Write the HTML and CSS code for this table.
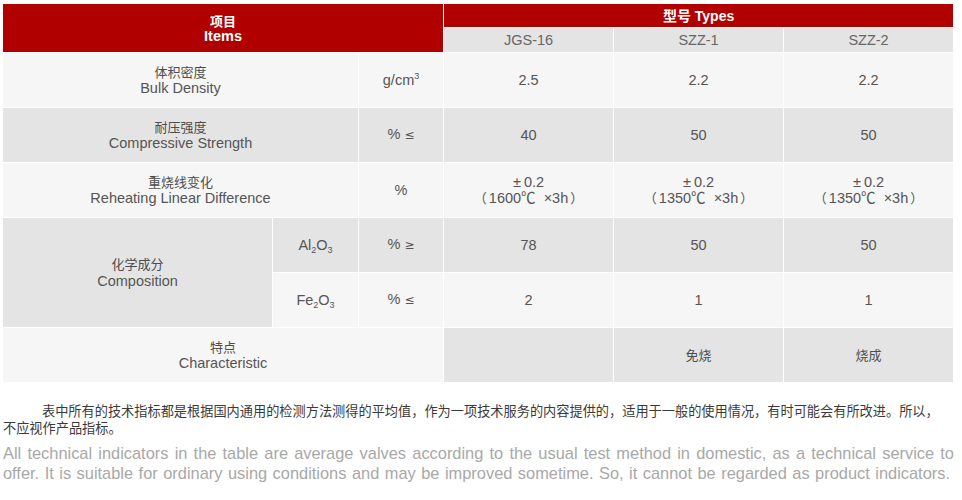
FILE: index.html
```html
<!DOCTYPE html>
<html lang="zh-CN">
<head>
<meta charset="utf-8">
<title>技术指标</title>
<link rel="stylesheet" href="styles.css">
</head>
<body>
<table class="spec">
  <colgroup>
    <col class="c1"><col class="c2"><col class="c3"><col class="c4"><col class="c5"><col class="c6">
  </colgroup>
  <thead>
    <tr class="h1">
      <th class="red items" colspan="3" rowspan="2"><span class="hzh">项目</span><br><span class="hen">Items</span></th>
      <th class="red types" colspan="3">型号 Types</th>
    </tr>
    <tr class="h2">
      <th class="sub">JGS-16</th>
      <th class="sub">SZZ-1</th>
      <th class="sub">SZZ-2</th>
    </tr>
  </thead>
  <tbody>
    <tr class="light">
      <td colspan="2"><span class="zh">体积密度</span><br>Bulk Density</td>
      <td>g/cm<sup>3</sup></td>
      <td>2.5</td><td>2.2</td><td>2.2</td>
    </tr>
    <tr class="gray">
      <td colspan="2"><span class="zh">耐压强度</span><br>Compressive Strength</td>
      <td>% <span class="rel">≤</span></td>
      <td>40</td><td>50</td><td>50</td>
    </tr>
    <tr class="light">
      <td colspan="2"><span class="zh">重烧线变化</span><br>Reheating Linear Difference</td>
      <td>%</td>
      <td class="two"><span class="pm">±</span>0.2<br><span class="paren">（</span>1600℃ <span class="x">×</span>3h<span class="paren">）</span></td>
      <td class="two"><span class="pm">±</span>0.2<br><span class="paren">（</span>1350℃ <span class="x">×</span>3h<span class="paren">）</span></td>
      <td class="two"><span class="pm">±</span>0.2<br><span class="paren">（</span>1350℃ <span class="x">×</span>3h<span class="paren">）</span></td>
    </tr>
    <tr class="gray">
      <td rowspan="2" class="comp"><span class="zh">化学成分</span><br>Composition</td>
      <td>Al<sub>2</sub>O<sub>3</sub></td>
      <td>% <span class="rel">≥</span></td>
      <td>78</td><td>50</td><td>50</td>
    </tr>
    <tr class="light">
      <td>Fe<sub>2</sub>O<sub>3</sub></td>
      <td>% <span class="rel">≤</span></td>
      <td>2</td><td>1</td><td>1</td>
    </tr>
    <tr class="light">
      <td colspan="3"><span class="zh">特点</span><br>Characteristic</td>
      <td class="g"></td>
      <td class="g zh">免烧</td>
      <td class="g zh">烧成</td>
    </tr>
  </tbody>
</table>

<div class="note">
  <p class="note-zh first">表中所有的技术指标都是根据国内通用的检测方法测得的平均值，作为一项技术服务的内容提供的，适用于一般的使用情况，有时可能会有所改进。所以，</p>
  <p class="note-zh">不应视作产品指标。</p>
  <p class="note-en l1">All technical indicators in the table are average valves according to the usual test method in domestic, as a technical service to</p>
  <p class="note-en l2">offer. It is suitable for ordinary using conditions and may be improved sometime. So, it cannot be regarded as product indicators.</p>
</div>
</body>
</html>
```
FILE: styles.css
```css
html, body {
  margin: 0;
  padding: 0;
  background: #ffffff;
}

body {
  font-family: "Liberation Sans", Arial, "Noto Sans CJK SC", sans-serif;
  color: #555555;
}

.spec {
  margin: 3px 0 0 2px;
  width: 952px;
  table-layout: fixed;
  border-collapse: separate;
  border-spacing: 1px;
}

.c1 { width: 269px; }
.c2 { width: 85px; }
.c3 { width: 84px; }
.c4 { width: 169px; }
.c5 { width: 169px; }
.c6 { width: 169px; }

.spec th,
.spec td {
  padding: 0;
  text-align: center;
  vertical-align: middle;
  font-weight: normal;
  font-size: 14.5px;
  line-height: 16.5px;
}

.h1 { height: 23px; }
.h2 { height: 24px; }

.red {
  background: #b00000;
  color: #ffffff;
}

.spec th.items {
  font-weight: bold;
  line-height: 15.5px;
  padding-top: 1px;
}

.hzh {
  font-family: "Noto Sans CJK SC", sans-serif;
  font-size: 13px;
  font-weight: bold;
  color: #ffffff;
}

.hen {
  font-size: 14.5px;
  font-weight: bold;
  color: #ffffff;
}

.spec th.types {
  font-weight: bold;
  font-size: 14px;
  padding-top: 1px;
}

.sub {
  background: #e4e4e4;
  color: #666666;
}

.spec tbody tr {
  height: 54px;
}

.light td { background: #f6f6f6; }
.gray td { background: #e4e4e4; }
.spec td.g { background: #e4e4e4; }

.zh {
  font-family: "Noto Sans CJK SC", sans-serif;
  font-size: 13px;
  color: #4d4d4d;
}

.spec td.zh {
  font-size: 13px;
}

sup {
  font-size: 9px;
  vertical-align: 6px;
  line-height: 0;
}

sub {
  font-size: 9px;
  vertical-align: -3px;
  line-height: 0;
}

.rel {
  font-family: "DejaVu Sans", sans-serif;
  font-size: 12px;
}

.spec td.two {
  line-height: 16px;
}

.pm {
  margin-right: 3px;
}

.x {
  margin-left: 4px;
}

.paren {
  font-family: "Noto Sans CJK SC", sans-serif;
  font-size: 13px;
  margin: 0 2px;
}

.note {
  padding: 19px 0 0 3px;
}

.note p {
  margin: 0;
}

.note-zh {
  font-family: "Noto Sans CJK SC", sans-serif;
  font-size: 13.2px;
  line-height: 17px;
  color: #3a3a3a;
}

.note-zh.first {
  text-indent: 39px;
  white-space: nowrap;
}

.note-en {
  font-size: 16.4px;
  line-height: 20px;
  color: #a8a8a8;
  white-space: nowrap;
  text-align: justify;
  text-align-last: justify;
}

.note-en.l1 {
  margin-top: 7px;
  width: 951px;
}

.note-en.l2 {
  width: 947px;
}
```
